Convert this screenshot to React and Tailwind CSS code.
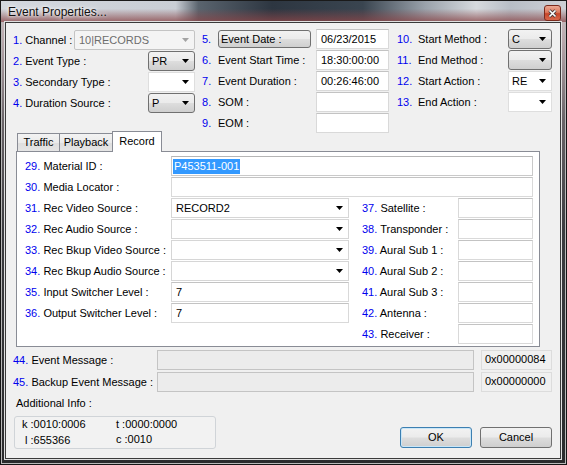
import React from "react";

const BLUE = "text-[#0000ee]";

function Arrow({ gray }) {
  return (
    <svg width="7" height="4" viewBox="0 0 7 4" className="shrink-0">
      <path d="M0 0H7L3.5 4Z" fill={gray ? "#a3a3a3" : "#000"} />
    </svg>
  );
}

const comboStyles = {
  gray: "border-[#707070] rounded-[3px] bg-[linear-gradient(to_bottom,#f2f2f2_0%,#ebebeb_48%,#dddddd_52%,#cfcfcf_100%)] pl-[3px]",
  white: "border-[#dedede] bg-white pl-[3px]",
  panel: "border-[#d6d6d6] bg-white pl-[4px]",
  disabled: "border-[#c4c4c4] rounded-[2px] bg-[#f4f4f4] text-[#6d6d6d] pl-[4px]",
};

function Combo({ value = "", variant = "white", className = "" }) {
  return (
    <div className={`h-[20px] border flex items-center justify-between pr-[5px] ${comboStyles[variant]} ${className}`}>
      <span>{value}</span>
      <Arrow gray={variant === "disabled"} />
    </div>
  );
}

function Field({ value = "", className = "" }) {
  return (
    <div className={`h-[20px] border border-[#d9d9d9] border-t-[#c3c3c3] bg-white flex items-center ${className}`}>
      {value}
    </div>
  );
}

function L({ n, children }) {
  return (
    <span className="whitespace-nowrap">
      <span className={BLUE}>{n}.</span> {children}
    </span>
  );
}

export default function App() {
  return (
    <div className="w-[567px] h-[465px] flex flex-col overflow-hidden font-['Liberation_Sans',Arial,sans-serif] text-[11px] leading-[13px] text-black bg-[linear-gradient(to_bottom,#cfc6ca_0px,#b9a8ac_40px,#6a6468_120px,#3c3c40_230px,#2a2a2c_100%)] shadow-[inset_0_0_0_1px_#151515,inset_0_0_0_2px_#b8b8b8]">
      {/* Title bar */}
      <div className="h-[22px] shrink-0 flex items-start justify-between pl-[8px] pr-[6px] bg-[linear-gradient(to_bottom,rgba(255,255,255,0)_0%,rgba(255,255,255,0)_40%,rgba(138,70,72,0.8)_100%),linear-gradient(to_right,#d3d8de_0%,#c9ced5_31%,#5a646e_35%,#2d3641_48%,#3a4550_64%,#9aa2ab_75%,#d6dade_84%,#b8bec6_90%,#cdd1d6_100%)] shadow-[inset_0_1px_0_#1a1a1a,inset_1px_0_0_#1a1a1a,inset_-1px_0_0_#1a1a1a]">
        <span className="mt-[5px] text-[12px] leading-[15px] text-[#111] [text-shadow:0_0_6px_#fff,0_0_3px_#fff]">
          Event Properties...
        </span>
        <div className="mt-[5px] w-[17px] h-[16px] rounded-[3px] border border-[#7a2a1c] bg-[linear-gradient(to_bottom,#eba893_0%,#dc7a5e_45%,#c8462a_55%,#d8664a_100%)] flex items-center justify-center">
          <svg width="9" height="9" viewBox="0 0 9 9">
            <path d="M1.5 1.5L7.5 7.5M7.5 1.5L1.5 7.5" stroke="#4a3a3a" strokeWidth="3.2" />
            <path d="M1.5 1.5L7.5 7.5M7.5 1.5L1.5 7.5" stroke="#fff" strokeWidth="1.6" />
          </svg>
        </div>
      </div>

      {/* Client */}
      <div className="flex-1 flex pl-[5px] pr-[6px] pb-[6px]">
        <div className="flex-1 flex flex-col border border-[#3a3a3a] bg-[#f0f0f0] shadow-[0_0_0_1px_#e0e0e0]">
          {/* Top section */}
          <div className="h-[108px] shrink-0 flex pt-[6px] pl-[7px]">
            <div className="w-[182px] flex flex-col gap-[1px] pt-[1px]">
              <div className="h-[20px] flex items-center justify-between">
                <L n="1">Channel :</L>
                <Combo variant="disabled" value="10|RECORDS" className="w-[121px]" />
              </div>
              <div className="h-[20px] flex items-center justify-between">
                <L n="2">Event Type :</L>
                <Combo variant="gray" value="PR" className="w-[47px]" />
              </div>
              <div className="h-[20px] flex items-center justify-between">
                <L n="3">Secondary Type :</L>
                <Combo variant="white" className="w-[47px]" />
              </div>
              <div className="h-[20px] flex items-center justify-between">
                <L n="4">Duration Source :</L>
                <Combo variant="gray" value="P" className="w-[47px]" />
              </div>
            </div>

            <div className="w-[187px] ml-[7px] flex flex-col gap-[1px]">
              <div className="h-[20px] flex items-center">
                <span className={`w-[16px] ${BLUE}`}>5.</span>
                <div className="w-[93px] h-[18px] border border-[#707070] rounded-[3px] bg-[linear-gradient(to_bottom,#f2f2f2_0%,#ebebeb_48%,#dddddd_52%,#cfcfcf_100%)] flex items-center pl-[2px]">
                  Event Date :
                </div>
                <Field value="06/23/2015" className="w-[73px] ml-auto pl-[4px]" />
              </div>
              {[
                ["6", "Event Start Time :", "18:30:00:00"],
                ["7", "Event Duration :", "00:26:46:00"],
                ["8", "SOM :", ""],
                ["9", "EOM :", ""],
              ].map(([n, label, v]) => (
                <div key={n} className="h-[20px] flex items-center">
                  <span className={`w-[16px] ${BLUE}`}>{n}.</span>
                  <span className="flex-1 whitespace-nowrap">{label}</span>
                  <Field value={v} className="w-[73px] pl-[4px]" />
                </div>
              ))}
            </div>

            <div className="w-[155px] ml-[8px] flex flex-col gap-[1px]">
              {[
                ["10", "Start Method :", "C", "gray"],
                ["11", "End Method :", "", "gray"],
                ["12", "Start Action :", "RE", "white"],
                ["13", "End Action :", "", "white"],
              ].map(([n, label, v, variant]) => (
                <div key={n} className="h-[20px] flex items-center">
                  <span className={`w-[21px] ${BLUE}`}>{n}.</span>
                  <span className="flex-1 whitespace-nowrap">{label}</span>
                  <Combo variant={variant} value={v} className="w-[44px]" />
                </div>
              ))}
            </div>
          </div>

          {/* Tabs */}
          <div className="h-[20px] shrink-0 flex items-end ml-[11px]">
            <div className="w-[43px] h-[18px] border border-b-0 border-[#898c95] bg-[linear-gradient(to_bottom,#f3f3f3_0%,#ebebeb_50%,#dedede_51%,#e5e5e5_100%)] flex items-center justify-center">
              Traffic
            </div>
            <div className="w-[54px] -ml-px h-[18px] border border-b-0 border-[#898c95] bg-[linear-gradient(to_bottom,#f3f3f3_0%,#ebebeb_50%,#dedede_51%,#e5e5e5_100%)] flex items-center justify-center">
              Playback
            </div>
            <div className="relative z-10 w-[50px] -ml-px -mb-px h-[21px] border border-b-0 border-[#898c95] bg-white flex items-start justify-center pt-[3px]">
              Record
            </div>
          </div>

          {/* Panel */}
          <div className="shrink-0 ml-[10px] w-[524px] border border-[#898c95] bg-white pt-[4px] pb-[2px] pl-[8px] flex flex-col gap-[1px]">
            <div className="h-[20px] flex items-center">
              <span className="w-[146px]"><L n="29">Material ID :</L></span>
              <div className="w-[362px] h-[20px] border border-[#c9c9c9] border-t-[#b5b5b5] bg-white flex items-center pl-[1px]">
                <span className="bg-[#3399ff] text-white px-[1px] leading-[15px]">P453511-001</span>
              </div>
            </div>
            <div className="h-[20px] flex items-center">
              <span className="w-[146px]"><L n="30">Media Locator :</L></span>
              <Field className="w-[362px]" />
            </div>
            <div className="flex gap-[13px]">
              <div className="flex flex-col gap-[1px]">
                {[
                  ["31", "Rec Video Source :", "RECORD2", "combo"],
                  ["32", "Rec Audio Source :", "", "combo"],
                  ["33", "Rec Bkup Video Source :", "", "combo"],
                  ["34", "Rec Bkup Audio Source :", "", "combo"],
                  ["35", "Input Switcher Level :", "7", "field"],
                  ["36", "Output Switcher Level :", "7", "field"],
                ].map(([n, label, v, kind]) => (
                  <div key={n} className="h-[20px] flex items-center">
                    <span className="w-[146px]"><L n={n}>{label}</L></span>
                    {kind === "combo" ? (
                      <Combo variant="panel" value={v} className="w-[178px]" />
                    ) : (
                      <Field value={v} className="w-[178px] pl-[4px]" />
                    )}
                  </div>
                ))}
              </div>
              <div className="flex flex-col gap-[1px]">
                {[
                  ["37", "Satellite :"],
                  ["38", "Transponder :"],
                  ["39", "Aural Sub 1 :"],
                  ["40", "Aural Sub 2 :"],
                  ["41", "Aural Sub 3 :"],
                  ["42", "Antenna :"],
                  ["43", "Receiver :"],
                ].map(([n, label]) => (
                  <div key={n} className="h-[20px] flex items-center">
                    <span className="w-[96px]"><L n={n}>{label}</L></span>
                    <Field className="w-[75px]" />
                  </div>
                ))}
              </div>
            </div>
          </div>

          {/* Messages */}
          <div className="mt-[3px] h-[20px] shrink-0 flex items-center pl-[7px]">
            <span className="w-[144px]"><L n="44">Event Message :</L></span>
            <div className="w-[317px] h-[20px] border border-[#c4c4c4] bg-[#ececec]" />
            <div className="ml-[7px] w-[71px] h-[20px] border border-[#dcdcdc] bg-[#f0f0f0] pl-[3px] pt-[2px]">0x00000084</div>
          </div>
          <div className="mt-[2px] h-[20px] shrink-0 flex items-center pl-[7px]">
            <span className="w-[144px]"><L n="45">Backup Event Message :</L></span>
            <div className="w-[317px] h-[20px] border border-[#c4c4c4] bg-[#ececec]" />
            <div className="ml-[7px] w-[71px] h-[20px] border border-[#dcdcdc] bg-[#f0f0f0] pl-[3px] pt-[2px]">0x00000000</div>
          </div>

          <div className="mt-[5px] pl-[10px] shrink-0">Additional Info :</div>

          <div className="mt-[6px] flex items-end justify-between pl-[8px] pr-[8px] shrink-0">
            <div className="w-[202px] h-[33px] border border-[#d0d4d8] rounded-[3px] bg-[#f2f2f2] pl-[7px] leading-[15px] grid grid-cols-[94px_1fr]">
              <span>k :0010:0006</span>
              <span>t :0000:0000</span>
              <span className="ml-[3px]">l :655366</span>
              <span className="-mt-[1px]">c :0010</span>
            </div>
            <div className="flex gap-[8px] mb-[1px]">
              <div className="w-[72px] h-[21px] border border-[#3c7fb1] rounded-[3px] bg-[linear-gradient(to_bottom,#f2f2f2_0%,#ebebeb_48%,#dddddd_52%,#cfcfcf_100%)] shadow-[inset_0_0_0_1px_#c9e6f7] flex items-center justify-center">
                OK
              </div>
              <div className="w-[72px] h-[21px] border border-[#707070] rounded-[3px] bg-[linear-gradient(to_bottom,#f2f2f2_0%,#ebebeb_48%,#dddddd_52%,#cfcfcf_100%)] flex items-center justify-center">
                Cancel
              </div>
            </div>
          </div>
        </div>
      </div>
    </div>
  );
}
